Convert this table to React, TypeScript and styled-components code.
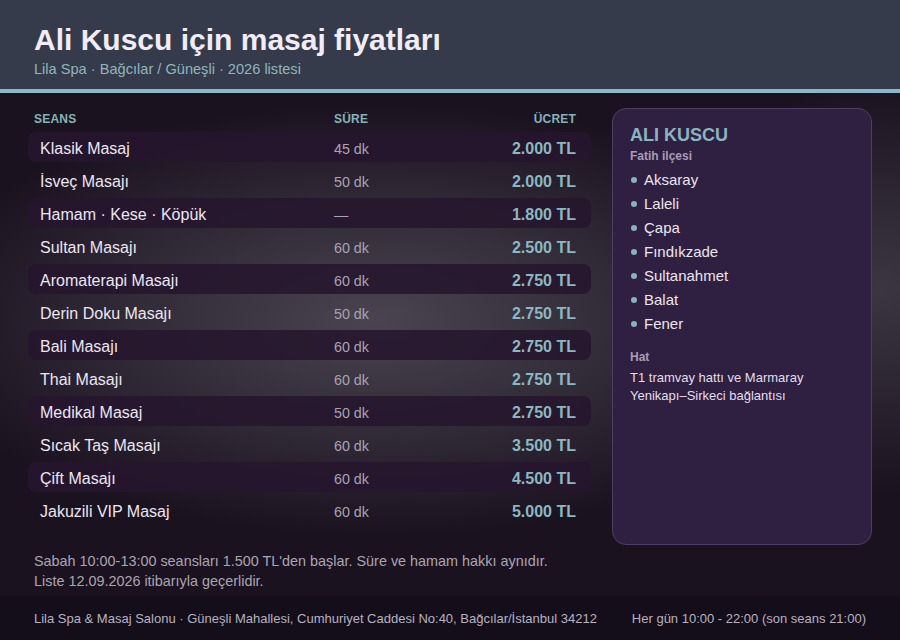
import React from "react";
import styled, { createGlobalStyle } from "styled-components";

const Global = createGlobalStyle`
  html, body { margin: 0; padding: 0; background: #1b1220; }
  body { font-family: "Liberation Sans", Arial, sans-serif; }
  * { box-sizing: border-box; }
`;

const Page = styled.div`
  width: 900px;
  height: 640px;
  display: flex;
  flex-direction: column;
  overflow: hidden;
  background:
    radial-gradient(ellipse 70% 45% at 42% 50%, rgba(112, 110, 120, 0.55), rgba(112, 110, 120, 0) 75%),
    radial-gradient(ellipse 30% 40% at 98% 45%, rgba(100, 98, 108, 0.45), rgba(100, 98, 108, 0) 80%),
    #1b1220;
`;

const Header = styled.header`
  height: 93px;
  flex: none;
  background: #353b4b;
  border-bottom: 4px solid #8bb7ca;
  padding: 23px 34px 0;
`;

const Title = styled.h1`
  margin: 0;
  font-size: 30px;
  line-height: 34px;
  font-weight: 700;
  color: #f1ecf7;
`;

const Subtitle = styled.div`
  margin-top: 3px;
  font-size: 14.6px;
  line-height: 18px;
  color: #8fb6bc;
`;

const Main = styled.main`
  flex: 1;
  display: grid;
  grid-template-columns: 563px 260px;
  grid-template-rows: auto auto;
  column-gap: 21px;
  padding: 15px 28px 0;
  align-content: start;
`;

const Table = styled.div`
  padding-bottom: 20px;
  display: flex;
  flex-direction: column;
`;

const HeadRow = styled.div`
  display: grid;
  grid-template-columns: 300px 1fr auto;
  height: 20px;
  align-items: center;
  margin-bottom: 4px;
  padding: 1px 15px 0 6px;
  font-size: 12px;
  font-weight: 700;
  letter-spacing: 0.2px;
  color: #86b2b8;
`;

const HeadCell = styled.div<{ $right?: boolean }>`
  text-align: ${(p) => (p.$right ? "right" : "left")};
`;

const Row = styled.div<{ $band: boolean }>`
  display: grid;
  grid-template-columns: 294px 1fr auto;
  height: 30px;
  margin-bottom: 3px;
  align-items: center;
  padding: 3px 15px 0 12px;
  border-radius: 8px;
  background: ${(p) => (p.$band ? "rgba(38, 22, 46, 0.88)" : "transparent")};
  &:last-child { margin-bottom: 0; }
`;

const Name = styled.div`
  font-size: 16px;
  color: #ece6f2;
`;

const Duration = styled.div`
  font-size: 14.3px;
  color: #a9a3b1;
`;

const Price = styled.div`
  font-size: 16px;
  font-weight: 700;
  color: #8bb8c1;
  text-align: right;
`;

const Panel = styled.aside`
  grid-row: 1;
  grid-column: 2;
  background: #2f1f40;
  border: 1px solid #4e3e64;
  border-radius: 14px;
  padding: 15px 17px;
`;

const PanelTitle = styled.div`
  font-size: 18px;
  line-height: 22px;
  font-weight: 700;
  color: #8ab5c0;
`;

const PanelLabel = styled.div<{ $gap: number }>`
  margin-top: ${(p) => p.$gap}px;
  font-size: 12px;
  line-height: 16px;
  font-weight: 700;
  color: #a99cb6;
`;

const List = styled.ul`
  list-style: none;
  margin: 3px 0 0;
  padding: 0;
`;

const Item = styled.li`
  display: flex;
  align-items: center;
  gap: 7px;
  height: 24px;
  font-size: 15px;
  color: #ebe5f1;
  &::before {
    content: "";
    width: 6px;
    height: 6px;
    border-radius: 50%;
    background: #86b3ba;
    margin-left: 1px;
    margin-top: 2px;
  }
`;

const PanelText = styled.div`
  margin-top: 4px;
  font-size: 13px;
  line-height: 18px;
  color: #e4ddec;
`;

const Notes = styled.div`
  grid-row: 2;
  grid-column: 1 / span 2;
  margin-top: 6px;
  padding-left: 6px;
  font-size: 14.4px;
  line-height: 20px;
  color: #aaa5b2;
`;

const Footer = styled.footer`
  height: 44px;
  flex: none;
  background: #130e1a;
  display: flex;
  align-items: center;
  justify-content: space-between;
  padding: 0 34px;
  font-size: 13px;
  color: #b8b2c0;
`;

const rows = [
  ["Klasik Masaj", "45 dk", "2.000 TL"],
  ["İsveç Masajı", "50 dk", "2.000 TL"],
  ["Hamam · Kese · Köpük", "—", "1.800 TL"],
  ["Sultan Masajı", "60 dk", "2.500 TL"],
  ["Aromaterapi Masajı", "60 dk", "2.750 TL"],
  ["Derin Doku Masajı", "50 dk", "2.750 TL"],
  ["Bali Masajı", "60 dk", "2.750 TL"],
  ["Thai Masajı", "60 dk", "2.750 TL"],
  ["Medikal Masaj", "50 dk", "2.750 TL"],
  ["Sıcak Taş Masajı", "60 dk", "3.500 TL"],
  ["Çift Masajı", "60 dk", "4.500 TL"],
  ["Jakuzili VIP Masaj", "60 dk", "5.000 TL"],
];

const places = ["Aksaray", "Laleli", "Çapa", "Fındıkzade", "Sultanahmet", "Balat", "Fener"];

export default function App() {
  return (
    <>
      <Global />
      <Page>
        <Header>
          <Title>Ali Kuscu için masaj fiyatları</Title>
          <Subtitle>Lila Spa · Bağcılar / Güneşli · 2026 listesi</Subtitle>
        </Header>
        <Main>
          <Table>
            <HeadRow>
              <HeadCell>SEANS</HeadCell>
              <HeadCell>SÜRE</HeadCell>
              <HeadCell $right>ÜCRET</HeadCell>
            </HeadRow>
            {rows.map(([n, d, p], i) => (
              <Row key={n} $band={i % 2 === 0}>
                <Name>{n}</Name>
                <Duration>{d}</Duration>
                <Price>{p}</Price>
              </Row>
            ))}
          </Table>
          <Panel>
            <PanelTitle>ALI KUSCU</PanelTitle>
            <PanelLabel $gap={2}>Fatih ilçesi</PanelLabel>
            <List>
              {places.map((p) => (
                <Item key={p}>{p}</Item>
              ))}
            </List>
            <PanelLabel $gap={14}>Hat</PanelLabel>
            <PanelText>
              T1 tramvay hattı ve Marmaray
              <br />
              Yenikapı–Sirkeci bağlantısı
            </PanelText>
          </Panel>
          <Notes>
            Sabah 10:00-13:00 seansları 1.500 TL'den başlar. Süre ve hamam hakkı aynıdır.
            <br />
            Liste 12.09.2026 itibarıyla geçerlidir.
          </Notes>
        </Main>
        <Footer>
          <span>Lila Spa &amp; Masaj Salonu · Güneşli Mahallesi, Cumhuriyet Caddesi No:40, Bağcılar/İstanbul 34212</span>
          <span>Her gün 10:00 - 22:00 (son seans 21:00)</span>
        </Footer>
      </Page>
    </>
  );
}
